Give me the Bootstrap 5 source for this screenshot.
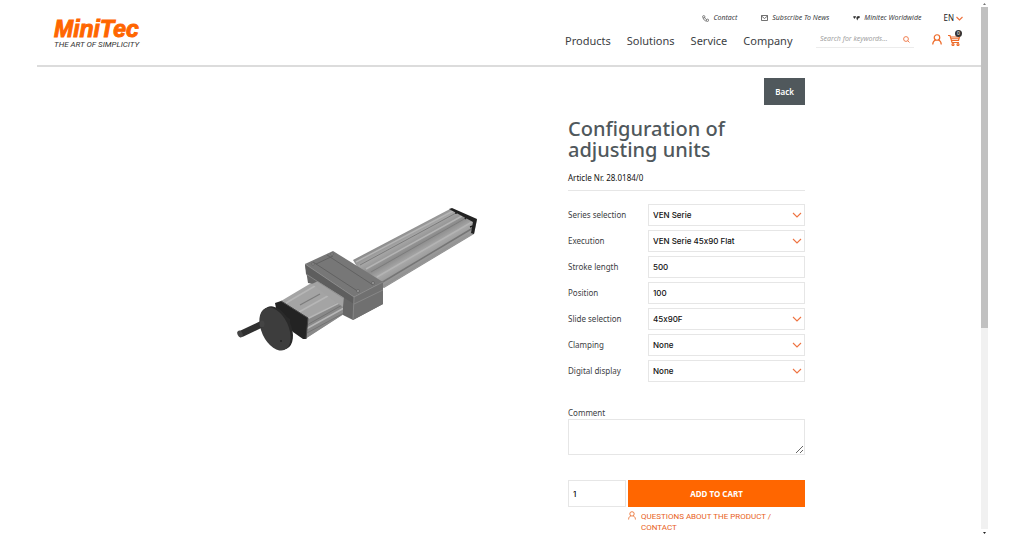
<!DOCTYPE html>
<html lang="en">
<head>
<meta charset="utf-8">
<meta name="viewport" content="width=device-width, initial-scale=1">
<title>MiniTec – Configuration of adjusting units</title>
<link href="https://cdn.jsdelivr.net/npm/bootstrap@5.3.0/dist/css/bootstrap.min.css" rel="stylesheet">
<style>
  :root { --brand: #ff6600; --ink: #3c4043; --slate: #50585c; --line: #e6e6e6; }
  body { font-family: "Noto Sans", "Open Sans", sans-serif; font-size: 8px; line-height: 12px; color: var(--ink); background: #fff; }
  a { color: inherit; text-decoration: none; }
  svg { display: block; flex: none; }
  .shell { min-height: 100vh; padding: 0 36px 0 37px; }
  .site-header { height: 67px; border-bottom: 2px solid #dcdcdc; padding: 12px 20px 0 17px; }
  .brand { margin-top: 6px; }
  .brand-name { font: italic 700 23px/23px "Liberation Sans", sans-serif; color: var(--brand); -webkit-text-stroke: 1px var(--brand); }
  .brand-tag { font: italic 400 8px/8px Roboto, sans-serif; color: #333; }
  .tools { width: 396px; }
  .meta-nav { font-size: 7px; font-style: italic; gap: 24px; }
  .meta-nav .lang { font-size: 8px; font-style: normal; color: #222; gap: 2px; margin-left: -2px; margin-right: -2px; }
  .tool-row { margin-top: 6px; }
  .main-nav { font-size: 11px; line-height: 16px; gap: 16px; padding-top: 3px; }
  .search-box { width: 98px; height: 17px; border-bottom: 1px solid #ececec; margin-right: 18px; }
  .search-box input { font-size: 7px; line-height: 12px; font-style: italic; color: #666; min-width: 0; }
  .search-box input::placeholder { color: #a2a2a2; opacity: 1; }
  .account { margin-right: 6px; }
  .cart-count { width: 7px; height: 7px; font-size: 5px; line-height: 7px; top: -4px; right: -1px; background: #333; color: #fff; }
  .product { display: grid; grid-template-columns: 531fr 237fr 176fr; }
  .product-figure { padding: 138px 90px 0 198px; }
  .panel { padding-top: 11px; }
  .btn-back { background: var(--slate); color: #fff; font-size: 8px; font-weight: 600; line-height: 13px; padding: 7px 11px; border-radius: 0; }
  .btn-back:hover, .btn-cart:hover { background: #333; color: #fff; }
  h1 { font-size: 20px; line-height: 21px; font-weight: 500; color: var(--slate); margin: 13px 0 12px; }
  .article { color: #111; padding-bottom: 6px; border-bottom: 1px solid var(--line); margin-bottom: 13px; }
  .options { display: grid; gap: 4px; }
  .option { display: grid; grid-template-columns: 80px 1fr; align-items: center; }
  .field, .field:focus { height: 22px; padding: 0 4px; font-family: Inter, sans-serif; font-feature-settings: "calt" 0; font-size: 8px; font-weight: 500; line-height: 12px; color: #111; border: 1px solid var(--line); border-radius: 0; }
  .form-select.field { background-image: url("data:image/svg+xml,%3Csvg xmlns='http://www.w3.org/2000/svg' viewBox='0 0 10 6'%3E%3Cpath d='M1 1l4 4 4-4' fill='none' stroke='%23ee7340' stroke-width='1.1'/%3E%3C/svg%3E"); background-size: 10px 6px; background-position: right 2px center; padding-right: 16px; }
  textarea.field, textarea.field:focus { height: 36px; }
  .comment { margin-top: 25px; }
  .buy { display: grid; grid-template-columns: 58px 1fr; column-gap: 2px; margin-top: 25px; }
  .buy .field { height: 27px; }
  .btn-cart { background: var(--brand); color: #fff; font-size: 8px; font-weight: 700; line-height: 12px; border-radius: 0; padding: 0; }
  .question { grid-column: 2; color: #e8611c; font-family: Roboto, sans-serif; line-height: 11px; padding-top: 4px; gap: 5px; }
  .scroll { flex: none; width: 7px; background: #f1f1f1; }
  .scroll-end { height: 7px; background: #fff; }
  .scroll-thumb { flex: 8 0 0; background: #c1c1c1; }
  .scroll-rest { flex: 5 0 0; }
</style>
</head>
<body>
<div class="shell d-flex">
  <div class="flex-grow-1">
    <header class="site-header d-flex justify-content-between align-items-start">
      <a href="#" class="brand">
        <div class="brand-name">MiniTec</div>
        <div class="brand-tag">THE ART OF SIMPLICITY</div>
      </a>
      <div class="tools">
        <div class="meta-nav d-flex justify-content-end align-items-center">
          <a href="#" class="d-flex align-items-center"><svg class="me-1" width="7" height="7" viewBox="0 0 14 14" fill="none" stroke="#444" stroke-width="1.3"><circle cx="3.500" cy="3.500" r="2.300"/><circle cx="11" cy="10.500" r="2.300"/><path d="M2 5.500C3 9 5 11.500 9 12.500M5.500 5c.5 2 1.500 3 3.500 4"/></svg>Contact</a>
          <a href="#" class="d-flex align-items-center"><svg class="me-1" width="7" height="6" viewBox="0 0 14 12" fill="none" stroke="#444" stroke-width="1.500"><path d="M1 1h12v10H1zM1 2l6 5 6-5"/></svg>Subscribe To News</a>
          <a href="#" class="d-flex align-items-center"><svg class="me-1" width="7" height="5" viewBox="0 0 14 10" fill="#333"><path d="M0 1l5-1 1 2-2 2-1 2-2-3zM7 2l3-2 4 1-1 3-3 1-1 4-2-3z"/></svg>Minitec Worldwide</a>
          <a href="#" class="lang d-flex align-items-center">EN<svg width="7" height="5" viewBox="0 0 14 10" fill="none" stroke="#ee7340" stroke-width="2.400"><path d="M1 2l6 6 6-6"/></svg></a>
        </div>
        <div class="tool-row d-flex align-items-center">
          <nav class="main-nav d-flex">
            <a href="#">Products</a><a href="#">Solutions</a><a href="#">Service</a><a href="#">Company</a>
          </nav>
          <form class="search-box d-flex align-items-center ms-auto">
            <input class="form-control border-0 p-0 ps-1 bg-transparent shadow-none" type="search" aria-label="Search" placeholder="Search for keywords...">
            <button type="button" class="btn border-0 p-0 me-1" aria-label="Search"><svg width="7" height="7" viewBox="0 0 14 14" fill="none" stroke="#ee7340" stroke-width="1.800"><circle cx="6" cy="6" r="4.800"/><path d="M9.500 9.500 13 13"/></svg></button>
          </form>
          <a href="#" class="account" aria-label="Account"><svg width="10" height="11" viewBox="0 0 20 22" fill="none" stroke="#ee6a28" stroke-width="2.400"><circle cx="10" cy="7" r="5.500"/><path d="M1.500 21c0-5 2-7.500 5.500-9M18.500 21c0-5-2-7.500-5.500-9"/></svg></a>
          <a href="#" class="position-relative" aria-label="Cart"><svg width="13" height="12" viewBox="0 0 26 24" fill="none" stroke="#ee6a28" stroke-width="2.400"><path d="M0 3h4l4 14h14M5 6h18l-2 7H7M6 9.500h16"/><circle cx="10" cy="21" r="2"/><circle cx="20" cy="21" r="2"/></svg><span class="cart-count position-absolute rounded-circle text-center">0</span></a>
        </div>
      </div>
    </header>

    <main class="product">
      <div class="product-figure">
        <svg class="w-100 h-auto" viewBox="235 204 243 150" role="img" aria-label="Adjusting unit VEN 45x90 with hand wheel">
          <defs>
            <linearGradient id="alu" gradientUnits="userSpaceOnUse" x1="400" y1="233" x2="420" y2="268"><stop offset="0" stop-color="#8b8b8b"/><stop offset=".2" stop-color="#a6a6a6"/><stop offset=".45" stop-color="#8c8c8c"/><stop offset=".65" stop-color="#a8a8a8"/><stop offset="1" stop-color="#8a8a8a"/></linearGradient>
          </defs>
          <path fill="url(#alu)" d="M353 259 450 208 477 219 474 233 384 287 365 279z"/>
          <path stroke="#7c7c7c" fill="none" d="M360 264 456 212M371 271 466 217"/>
          <path stroke="#b4b4b4" stroke-width="1.500" fill="none" d="M356 261 453 210M366 268 462 215M377 276 472 221"/>
          <path stroke="#757575" stroke-width="1.500" fill="none" d="M381 282 473 227"/>
          <path stroke="#999" fill="none" d="M384 286 474 232"/>
          <path d="M449 208 452 207 477 218 474 233 471 232 473 221z" fill="#222"/>
          <path d="M456 210v3M467 215l-2 3M473 225l-3 1" stroke="#222" stroke-width="1.500"/>
          <path fill="#a4a4a4" d="M281 300 318 278 350 294 350 309 305 338 307 318z"/>
          <path fill="#898989" d="M307 318 346 297 350 309 305 338z"/>
          <path stroke="#7c7c7c" stroke-width="1.200" fill="none" d="M300 304 320 293"/>
          <path stroke="#b6b6b6" stroke-width="1.600" fill="none" d="M286 302 320 282M299 311 335 291M307 318 343 300M306 328 344 307"/>
          <path stroke="#747474" fill="none" d="M307 324 344 303M305 333 344 312"/>
          <path fill="#232323" d="M275 302 281 300 308 317 306 338 303 338 293 331 277 312z"/>
          <path stroke="#444" fill="none" d="M281 300 308 317 306 338"/>
          <path fill="#666" d="M305 263 354 296 383 281 383 303 353 319 343 314 343 300 320 284 308 282z"/>
          <path fill="#a2a2a2" d="M312 283 320 279 344 295 343 306 330 297z"/>
          <path fill="#777" d="M305 263 333 250 383 281 354 296z"/>
          <path fill="#5e5e5e" d="M305 263 354 296V303L306 273z"/>
          <path fill="#707070" d="M354 296 383 281V303L353 319z"/>
          <path stroke="#8d8d8d" fill="none" stroke-width=".8" d="M305 263 354 296 383 281M354 303 383 289M354 296 353 319M306 273 343 297"/>
          <path stroke="#5c5c5c" stroke-width=".8" fill="none" d="M313 261 359 291M327 254 373 284M316 263 333 255"/>
          <g fill="#999" stroke="#555" stroke-width=".6"><circle cx="313" cy="263" r="1.200"/><circle cx="332" cy="253" r="1.200"/><circle cx="358" cy="290" r="1.500"/><circle cx="373" cy="282" r="1.500"/></g>
          <path d="M284 314 290 318 290 331 278 327z" fill="#292929"/>
          <ellipse cx="277" cy="327" rx="14" ry="23" fill="#292929" transform="rotate(-25 277 327)"/>
          <ellipse cx="275" cy="328" rx="13.500" ry="23" fill="#3d3d3d" transform="rotate(-25 275 328)"/>
          <circle cx="281" cy="340" r="1" fill="#222"/>
          <path d="M241 333 262 323" stroke="#303030" stroke-width="6.500"/>
          <ellipse cx="240" cy="333" rx="2.500" ry="3.500" fill="#444" transform="rotate(-25 240 333)"/>
          <ellipse cx="262" cy="323" rx="2.500" ry="3.500" fill="#444"/>
        </svg>
      </div>

      <section class="panel">
        <div class="d-flex justify-content-end"><button type="button" class="btn btn-back border-0">Back</button></div>
        <h1>Configuration of adjusting units</h1>
        <div class="article">Article Nr. 28.0184/0</div>
        <form>
          <div class="options">
            <div class="option"><label for="series">Series selection</label><select id="series" class="form-select field"><option>VEN Serie</option></select></div>
            <div class="option"><label for="execution">Execution</label><select id="execution" class="form-select field"><option>VEN Serie 45x90 Flat</option></select></div>
            <div class="option"><label for="stroke">Stroke length</label><input id="stroke" class="form-control field" type="text" value="500"></div>
            <div class="option"><label for="position">Position</label><input id="position" class="form-control field" type="text" value="100"></div>
            <div class="option"><label for="slide">Slide selection</label><select id="slide" class="form-select field"><option>45x90F</option></select></div>
            <div class="option"><label for="clamping">Clamping</label><select id="clamping" class="form-select field"><option>None</option></select></div>
            <div class="option"><label for="display">Digital display</label><select id="display" class="form-select field"><option>None</option></select></div>
          </div>
          <div class="comment">
            <label class="d-block" for="comment">Comment</label>
            <textarea id="comment" class="form-control field"></textarea>
          </div>
          <div class="buy">
            <input class="form-control field" type="text" value="1" aria-label="Quantity">
            <button type="button" class="btn btn-cart border-0">ADD TO CART</button>
            <a href="#" class="question d-flex"><svg width="8" height="9" viewBox="0 0 20 22" fill="none" stroke="#e8611c" stroke-width="2"><circle cx="10" cy="7" r="5.500"/><path d="M1.500 21c0-5 2-7.500 5.500-9M18.500 21c0-5-2-7.500-5.500-9"/></svg><span>QUESTIONS ABOUT THE PRODUCT / CONTACT</span></a>
          </div>
        </form>
      </section>
    </main>
  </div>
  <div class="scroll d-flex flex-column" aria-hidden="true">
    <div class="scroll-end d-flex align-items-center justify-content-center"><svg width="3" height="2" viewBox="0 0 3 2" fill="#777"><path d="M0 2 1.500 0 3 2z"/></svg></div>
    <div class="scroll-thumb"></div>
    <div class="scroll-rest"></div>
    <div class="scroll-end d-flex align-items-center justify-content-center"><svg width="3" height="2" viewBox="0 0 3 2" fill="#222"><path d="M0 0h3L1.500 2z"/></svg></div>
  </div>
</div>
</body>
</html>
